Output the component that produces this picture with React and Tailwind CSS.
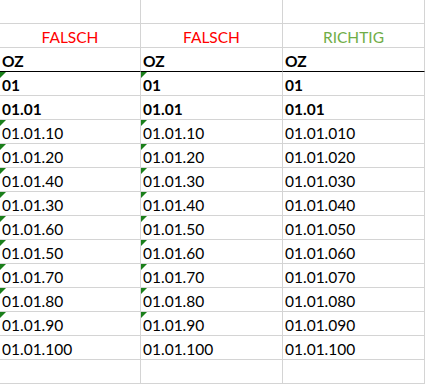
const COLS = ['w-[141px]', 'w-[142px]', 'w-[142px]'];

// [Spalte 1, Spalte 2, Spalte 3], flag = grünes Dreieck in Spalte 1 und 2
const ROWS = [
  { cells: ['01', '01', '01'], bold: true, flag: true },
  { cells: ['01.01', '01.01', '01.01'], bold: true },
  { cells: ['01.01.10', '01.01.10', '01.01.010'], flag: true },
  { cells: ['01.01.20', '01.01.20', '01.01.020'], flag: true },
  { cells: ['01.01.40', '01.01.30', '01.01.030'], flag: true },
  { cells: ['01.01.30', '01.01.40', '01.01.040'], flag: true },
  { cells: ['01.01.60', '01.01.50', '01.01.050'], flag: true },
  { cells: ['01.01.50', '01.01.60', '01.01.060'], flag: true },
  { cells: ['01.01.70', '01.01.70', '01.01.070'], flag: true },
  { cells: ['01.01.80', '01.01.80', '01.01.080'], flag: true },
  { cells: ['01.01.90', '01.01.90', '01.01.090'], flag: true },
  { cells: ['01.01.100', '01.01.100', '01.01.100'] },
];

function Cell({ col, children, className = '', flag = false, bottom = 'border-b-[#d4d4d4]' }) {
  return (
    <div
      className={`${COLS[col]} relative h-[24px] flex items-end pb-[1px] px-[2px] leading-[18px] border-r border-b border-r-[#d4d4d4] ${bottom} ${className}`}
    >
      {flag && (
        <span className="absolute left-0 top-0 w-0 h-0 border-t-[6px] border-t-[#1a7f1a] border-r-[6px] border-r-transparent" />
      )}
      <span className="whitespace-nowrap">{children}</span>
    </div>
  );
}

export default function App() {
  return (
    <div
      className="w-[425px] h-[384px] bg-white text-[15.5px] text-black overflow-hidden"
      style={{ fontFamily: 'Lato, "Liberation Sans", sans-serif' }}
    >
      {/* leere Zeile */}
      <div className="flex">
        <Cell col={0} />
        <Cell col={1} />
        <Cell col={2} />
      </div>

      {/* Überschriften */}
      <div className="flex">
        <Cell col={0} className="justify-center text-[#ff0000]">FALSCH</Cell>
        <Cell col={1} className="justify-center text-[#ff0000]">FALSCH</Cell>
        <Cell col={2} className="justify-center text-[#70ad47]">RICHTIG</Cell>
      </div>

      {/* OZ mit schwarzer Linie */}
      <div className="flex">
        <Cell col={0} className="font-bold" bottom="border-b-black">OZ</Cell>
        <Cell col={1} className="font-bold" bottom="border-b-black">OZ</Cell>
        <Cell col={2} className="font-bold" bottom="border-b-black">OZ</Cell>
      </div>

      {ROWS.map((row, i) => (
        <div key={i} className="flex">
          {row.cells.map((c, j) => (
            <Cell key={j} col={j} className={row.bold ? 'font-bold' : ''} flag={row.flag && j < 2}>
              {c}
            </Cell>
          ))}
        </div>
      ))}

      {/* leere Zeile unten */}
      <div className="flex">
        <Cell col={0} />
        <Cell col={1} />
        <Cell col={2} />
      </div>
    </div>
  );
}
